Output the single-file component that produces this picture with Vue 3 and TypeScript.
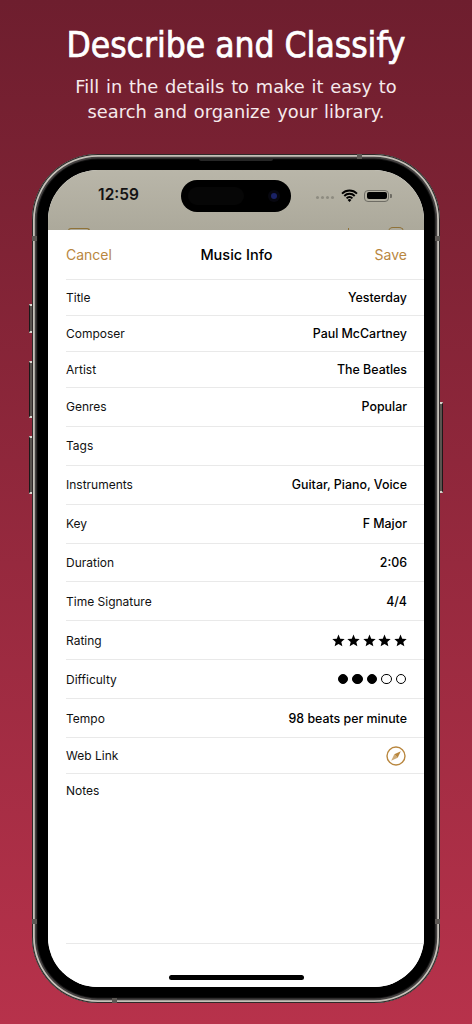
<script setup lang="ts">
interface Row {
  label: string
  value?: string
  kind?: 'stars' | 'dots' | 'link'
  tall?: boolean
}

const rows: Row[] = [
  { label: 'Title', value: 'Yesterday' },
  { label: 'Composer', value: 'Paul McCartney' },
  { label: 'Artist', value: 'The Beatles' },
  { label: 'Genres', value: 'Popular', tall: true },
  { label: 'Tags', tall: true },
  { label: 'Instruments', value: 'Guitar, Piano, Voice', tall: true },
  { label: 'Key', value: 'F Major', tall: true },
  { label: 'Duration', value: '2:06', tall: true },
  { label: 'Time Signature', value: '4/4', tall: true },
  { label: 'Rating', kind: 'stars', tall: true },
  { label: 'Difficulty', kind: 'dots', tall: true },
  { label: 'Tempo', value: '98 beats per minute', tall: true },
  { label: 'Web Link', kind: 'link' },
]
const stars = [1, 2, 3, 4, 5]
const dots = [true, true, true, false, false]
</script>

<template>
  <main class="page">
    <header class="intro">
      <h1>Describe and Classify</h1>
      <p>Fill in the details to make it easy to<br />search and organize your library.</p>
    </header>

    <div class="phone">
      <span class="btn l1"></span>
      <span class="btn l2"></span>
      <span class="btn l3"></span>
      <span class="btn r1"></span>
      <span class="speaker"></span>
      <span class="band b-top"></span>
      <span class="band b-bottom"></span>
      <span class="band b-lt"></span>
      <span class="band b-rt"></span>
      <span class="band b-lb"></span>
      <span class="band b-rb"></span>

      <div class="screen">
        <div class="status">
          <span class="time">12:59</span>
          <div class="island"><span class="sensor"></span><span class="lens"></span></div>
          <div class="indicators">
            <span class="signal"><i></i><i></i><i></i><i></i></span>
            <svg class="wifi" width="17" height="13" viewBox="0 0 17 13">
              <path d="M1 4.600a10.600 10.600 0 0 1 15 0M3.300 7a7.300 7.300 0 0 1 10.400 0M5.600 9.300a4 4 0 0 1 5.800 0" fill="none" stroke="#000" stroke-width="1.900" />
              <path d="M8.500 13 6.600 10.900a2.700 2.700 0 0 1 3.800 0z" fill="#000" />
            </svg>
            <span class="battery"><span class="fill"></span></span>
            <span class="nub"></span>
          </div>
          <span class="peek book"></span>
          <span class="peek tick"></span>
          <span class="peek ring"></span>
        </div>

        <section class="sheet">
          <div class="nav">
            <span class="action">Cancel</span>
            <span class="heading">Music Info</span>
            <span class="action end">Save</span>
          </div>
          <div class="list">
            <div v-for="row in rows" :key="row.label" class="row" :class="{ tall: row.tall }">
              <span class="label">{{ row.label }}</span>
              <span v-if="row.value" class="value">{{ row.value }}</span>
              <span v-else-if="row.kind === 'stars'" class="stars">
                <svg v-for="s in stars" :key="s" width="13" height="13" viewBox="0 0 24 24">
                  <path d="M12 1l3.200 7.600 8.200.7-6.200 5.400 1.900 8L12 18.400l-7.100 4.300 1.900-8L.6 9.300l8.200-.7z" fill="#000" />
                </svg>
              </span>
              <span v-else-if="row.kind === 'dots'" class="dots">
                <span v-for="(on, i) in dots" :key="i" class="dot" :class="{ on }"></span>
              </span>
              <svg v-else-if="row.kind === 'link'" class="compass" width="20" height="20" viewBox="0 0 20 20">
                <circle cx="10" cy="10" r="9" fill="none" stroke="#b9873f" stroke-width="1.400" />
                <path d="M14.800 5.200 11.700 11.700 8.300 8.300z" fill="#b9873f" />
                <path d="M5.200 14.800 8.300 8.300 11.700 11.700z" fill="#b9873f" opacity=".7" />
              </svg>
            </div>
          </div>
          <div class="notes">
            <span class="label">Notes</span>
          </div>
          <div class="foot"><span class="home"></span></div>
        </section>
      </div>
    </div>
  </main>
</template>

<style>
html, body { margin: 0; padding: 0; }
</style>

<style scoped>
.page {
  width: 472px;
  height: 1024px;
  overflow: hidden;
  box-sizing: border-box;
  background: linear-gradient(180deg, #6e1e2e 0%, #b7324b 100%);
  display: flex;
  flex-direction: column;
  align-items: center;
  font-family: Inter, "Liberation Sans", sans-serif;
}
.intro {
  height: 154px;
  width: 100%;
  text-align: center;
  color: #fff;
  box-sizing: border-box;
  padding-top: 24px;
}
.intro h1 {
  margin: 0;
  font-family: "DejaVu Sans Condensed", "DejaVu Sans", sans-serif;
  font-size: 35.100px;
  line-height: 42px;
  font-weight: 400;
  -webkit-text-stroke: .7px #fff;
}
.intro p {
  margin: 8px 0 0;
  font-family: "DejaVu Sans", sans-serif;
  font-size: 17.800px;
  word-spacing: 1.200px;
  line-height: 25px;
  color: #f6eaec;
}
.phone {
  position: relative;
  width: 408px;
  height: 849px;
  flex: none;
  box-sizing: border-box;
  padding: 16px;
  border-radius: 66px;
  background: #000;
  box-shadow:
    inset 0 0 0 1px #2e2828,
    inset 0 0 0 2.800px #c4c0b8,
    inset 0 0 0 4.500px #444141,
    inset 0 0 0 5.500px #141414;
}
.btn {
  position: absolute;
  width: 3px;
  background: #5a5450;
  box-sizing: border-box;
  border-top: 2px solid #d8d4cc;
  border-bottom: 2px solid #d8d4cc;
}
.l1 { left: -3px; top: 150px; height: 29px; border-left: 1px solid #1c1818; }
.l2 { left: -3px; top: 207px; height: 57px; border-left: 1px solid #1c1818; }
.l3 { left: -3px; top: 282px; height: 58px; border-left: 1px solid #1c1818; }
.r1 { right: -3px; top: 248px; height: 91px; border-right: 1px solid #1c1818; }
.speaker {
  position: absolute;
  left: 167px;
  top: 5px;
  width: 74px;
  height: 2px;
  background: #262626;
  border-radius: 0 0 3px 3px;
}
.band {
  position: absolute;
  background: #5c5854;
}
.b-top { left: 325px; top: 0; width: 5px; height: 5px; }
.b-bottom { left: 80px; bottom: 0; width: 5px; height: 5px; }
.b-lt { left: 0; top: 82px; width: 5px; height: 5px; }
.b-rt { right: 0; top: 82px; width: 5px; height: 5px; }
.b-lb { left: 0; top: 765px; width: 5px; height: 5px; }
.b-rb { right: 0; top: 765px; width: 5px; height: 5px; }
.screen {
  height: 100%;
  border-radius: 50px;
  overflow: hidden;
  background: #fff;
  display: flex;
  flex-direction: column;
}
.status {
  position: relative;
  height: 60px;
  flex: none;
  display: flex;
  align-items: flex-start;
  background: linear-gradient(180deg, #b9b6a9, #aca99b);
}
.time {
  margin: 16px 0 0 50px;
  width: 41px;
  font-size: 15.500px;
  line-height: 18px;
  font-weight: 600;
  color: #141414;
  text-align: center;
}
.island {
  margin: 10px 0 0 42px;
  width: 110px;
  height: 32px;
  border-radius: 16px;
  background: #000;
  display: flex;
  align-items: center;
  justify-content: space-between;
  padding: 0 14px 0 7px;
  box-sizing: border-box;
}
.sensor {
  width: 56px;
  height: 18px;
  border-radius: 9px;
  background: #060606;
}
.lens {
  width: 6px;
  height: 6px;
  border-radius: 50%;
  background: #1a2266;
  box-shadow: 0 0 0 3px #07070f;
}
.indicators {
  margin: 19px 0 0 25px;
  height: 13px;
  display: flex;
  align-items: center;
}
.signal {
  display: flex;
  gap: 2px;
  margin: 4px 7px 0 0;
}
.signal i {
  width: 3px;
  height: 3px;
  border-radius: 50%;
  background: #8e8c81;
}
.battery {
  margin-left: 6px;
  width: 25px;
  height: 12px;
  box-sizing: border-box;
  border: 1px solid #6e6c64;
  border-radius: 4px;
  padding: 1.500px;
  display: flex;
}
.fill {
  flex: 1;
  background: #000;
  border-radius: 2px;
}
.nub {
  margin-left: 1px;
  width: 1.500px;
  height: 4px;
  background: #6e6c64;
  border-radius: 0 1px 1px 0;
}
.peek {
  position: absolute;
  box-sizing: border-box;
}
.book {
  left: 20px;
  top: 58px;
  width: 22px;
  height: 4px;
  border: 1px solid #8f7238;
  border-bottom: 0;
  border-radius: 3px 3px 0 0;
}
.tick {
  left: 300px;
  top: 58px;
  width: 1px;
  height: 3px;
  background: #8f7238;
}
.ring {
  left: 340px;
  top: 57px;
  width: 16px;
  height: 5px;
  border: 1px solid #8f7238;
  border-bottom: 0;
  border-radius: 8px 8px 0 0;
}
.sheet {
  position: relative;
  flex: 1;
  min-height: 0;
  background: #fff;
  border-radius: 10px 10px 0 0;
  display: flex;
  flex-direction: column;
}
.nav {
  height: 49px;
  flex: none;
  box-sizing: border-box;
  padding: 0 17px 0 18px;
  display: grid;
  grid-template-columns: 1fr auto 1fr;
  align-items: center;
}
.action {
  font-size: 14px;
  color: #b9873f;
}
.action.end { text-align: right; }
.heading {
  font-size: 14.500px;
  font-weight: 500;
  color: #000;
}
.list {
  margin-left: 18px;
  border-top: 1px solid #e9e9e9;
  flex: none;
}
.row {
  height: 36px;
  box-sizing: border-box;
  border-bottom: 1px solid #e9e9e9;
  padding-right: 17px;
  display: flex;
  align-items: center;
  justify-content: space-between;
}
.row.tall { height: 38.900px; }
.label {
  font-size: 12px;
  color: #111;
}
.value {
  font-size: 12.400px;
  font-weight: 550;
  color: #000;
}
.stars {
  display: flex;
  gap: 2.500px;
  margin-right: .5px;
}
.stars svg { display: block; }
.dots {
  display: flex;
  gap: 4px;
  margin-right: .75px;
}
.dot {
  width: 10.500px;
  height: 10.500px;
  box-sizing: border-box;
  border-radius: 50%;
  border: 1.200px solid #000;
}
.dot.on { background: #000; }
.compass { display: block; margin-right: 1.500px; }
.notes {
  height: 170px;
  flex: none;
  margin-left: 18px;
  box-sizing: border-box;
  border-bottom: 1px solid #e9e9e9;
  padding-top: 9px;
}
.notes .label { display: block; line-height: 16px; }
.foot {
  flex: 1;
  display: flex;
  align-items: flex-end;
  justify-content: center;
  padding-bottom: 7px;
}
.home {
  width: 135px;
  height: 5px;
  border-radius: 3px;
  background: #000;
}
</style>
